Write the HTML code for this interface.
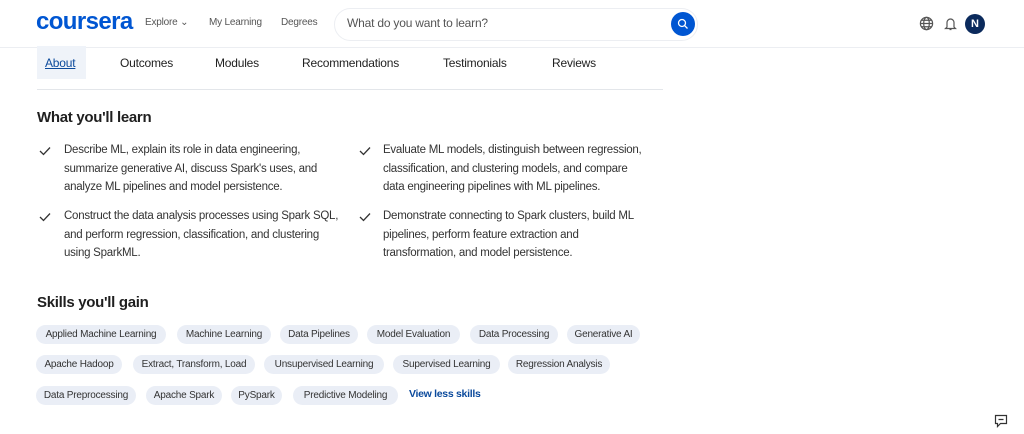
<!DOCTYPE html>
<html><head><meta charset="utf-8"><style>
*{margin:0;padding:0;box-sizing:border-box}
body{width:1024px;height:434px;background:#fff;font-family:"Liberation Sans",sans-serif;color:#1f1f1f;position:relative;overflow:hidden}
.a{position:absolute;white-space:nowrap}
.hdr{position:absolute;left:0;top:0;width:1024px;height:48px;border-bottom:1px solid #eceef2}
.nav{font-size:10px;color:#555;letter-spacing:-.2px}
.tab{font-size:12px;color:#1f1f1f;top:56px;letter-spacing:-.2px}
.h2{font-size:15px;font-weight:bold;letter-spacing:-.3px;color:#1f1f1f}
.li{font-size:11.5px;line-height:18.5px;letter-spacing:-.25px;color:#333}
.chk{position:absolute;width:12px;height:10px}
.chip{position:absolute;height:19px;border-radius:10px;background:#eaeef6;font-size:10px;letter-spacing:-.2px;color:#333;text-align:center;line-height:19px;white-space:nowrap;overflow:visible}
</style></head><body>
<div class="hdr"></div>
<div class="a" style="left:36px;top:8px;font-size:24px;font-weight:bold;color:#0056d2;letter-spacing:-.6px">coursera</div>
<div class="a nav" style="left:145px;top:17px">Explore ⌄</div>
<div class="a nav" style="left:209px;top:17px">My Learning</div>
<div class="a nav" style="left:281px;top:17px">Degrees</div>
<div class="a" style="left:334px;top:8px;width:364px;height:33px;border:1px solid #eceef2;border-radius:17px"></div>
<div class="a" style="left:347px;top:16px;font-size:12px;color:#555;letter-spacing:-.2px">What do you want to learn?</div>
<div class="a" style="left:671px;top:12px;width:24px;height:24px;border-radius:50%;background:#0056d2"></div>
<svg class="a" style="left:677px;top:18px" width="12" height="12" viewBox="0 0 12 12"><circle cx="5" cy="5" r="3.5" fill="none" stroke="#fff" stroke-width="1.3"/><path d="M7.6 7.6L10.5 10.5" stroke="#fff" stroke-width="1.3"/></svg>
<svg class="a" style="left:919px;top:16px" width="15" height="15" viewBox="0 0 16 16" fill="none" stroke="#555" stroke-width="1.3"><circle cx="8" cy="8" r="6.5"/><ellipse cx="8" cy="8" rx="3" ry="6.5"/><path d="M1.5 8h13M2.5 4.5h11M2.5 11.5h11"/></svg>
<svg class="a" style="left:944px;top:16px" width="13" height="15" viewBox="0 0 13 15" fill="none" stroke="#555" stroke-width="1.2"><path d="M3 11V6.5a3.5 3.5 0 0 1 7 0V11l1.5 1.5h-10z M5.5 13.5h2"/></svg>
<div class="a" style="left:965px;top:14px;width:20px;height:20px;border-radius:50%;background:#0b2a5c;color:#fff;font-size:11px;font-weight:bold;text-align:center;line-height:20px">N</div>

<div class="a" style="left:37px;top:46px;width:49px;height:33px;background:#eff3f9"></div>
<div class="a tab" style="left:45px;color:#0b4a9c;text-decoration:underline">About</div>
<div class="a tab" style="left:120px">Outcomes</div>
<div class="a tab" style="left:215px">Modules</div>
<div class="a tab" style="left:302px">Recommendations</div>
<div class="a tab" style="left:443px">Testimonials</div>
<div class="a tab" style="left:552px">Reviews</div>
<div class="a" style="left:37px;top:89px;width:626px;height:1px;background:#e3e6ea"></div>

<div class="a h2" style="left:37px;top:109px">What you'll learn</div>
<svg class="chk" style="left:39px;top:146px" viewBox="0 0 12 10"><path d="M1 5l3.5 3.5L11 1.5" fill="none" stroke="#333" stroke-width="1.3"/></svg>
<div class="a li" style="left:64px;top:141px">Describe ML, explain its role in data engineering,<br>summarize generative AI, discuss Spark's uses, and<br>analyze ML pipelines and model persistence.</div>
<svg class="chk" style="left:359px;top:146px" viewBox="0 0 12 10"><path d="M1 5l3.5 3.5L11 1.5" fill="none" stroke="#333" stroke-width="1.3"/></svg>
<div class="a li" style="left:383px;top:141px">Evaluate ML models, distinguish between regression,<br>classification, and clustering models, and compare<br>data engineering pipelines with ML pipelines.</div>
<svg class="chk" style="left:39px;top:212px" viewBox="0 0 12 10"><path d="M1 5l3.5 3.5L11 1.5" fill="none" stroke="#333" stroke-width="1.3"/></svg>
<div class="a li" style="left:64px;top:207px">Construct the data analysis processes using Spark SQL,<br>and perform regression, classification, and clustering<br>using SparkML.</div>
<svg class="chk" style="left:359px;top:212px" viewBox="0 0 12 10"><path d="M1 5l3.5 3.5L11 1.5" fill="none" stroke="#333" stroke-width="1.3"/></svg>
<div class="a li" style="left:383px;top:207px">Demonstrate connecting to Spark clusters, build ML<br>pipelines, perform feature extraction and<br>transformation, and model persistence.</div>

<div class="a h2" style="left:37px;top:294px">Skills you'll gain</div>
<div class="chip" style="left:36px;top:325px;width:130px">Applied Machine Learning</div>
<div class="chip" style="left:177px;top:325px;width:94px">Machine Learning</div>
<div class="chip" style="left:280px;top:325px;width:78px">Data Pipelines</div>
<div class="chip" style="left:367px;top:325px;width:93px">Model Evaluation</div>
<div class="chip" style="left:470px;top:325px;width:88px">Data Processing</div>
<div class="chip" style="left:567px;top:325px;width:73px">Generative AI</div>
<div class="chip" style="left:36px;top:355px;width:86px">Apache Hadoop</div>
<div class="chip" style="left:133px;top:355px;width:122px">Extract, Transform, Load</div>
<div class="chip" style="left:264px;top:355px;width:120px">Unsupervised Learning</div>
<div class="chip" style="left:393px;top:355px;width:107px">Supervised Learning</div>
<div class="chip" style="left:508px;top:355px;width:102px">Regression Analysis</div>
<div class="chip" style="left:36px;top:386px;width:100px">Data Preprocessing</div>
<div class="chip" style="left:146px;top:386px;width:76px">Apache Spark</div>
<div class="chip" style="left:231px;top:386px;width:51px">PySpark</div>
<div class="chip" style="left:293px;top:386px;width:105px">Predictive Modeling</div>
<div class="a" style="left:409px;top:388px;font-size:10.5px;font-weight:bold;color:#0b4a9c;letter-spacing:-.3px">View less skills</div>
<svg class="a" style="left:994px;top:414px" width="14" height="14" viewBox="0 0 14 14" fill="none" stroke="#333" stroke-width="1.2"><path d="M1.5 1.5h11v8h-6l-3 3v-3h-2z M4.5 5.5h5"/></svg>
</body></html>
